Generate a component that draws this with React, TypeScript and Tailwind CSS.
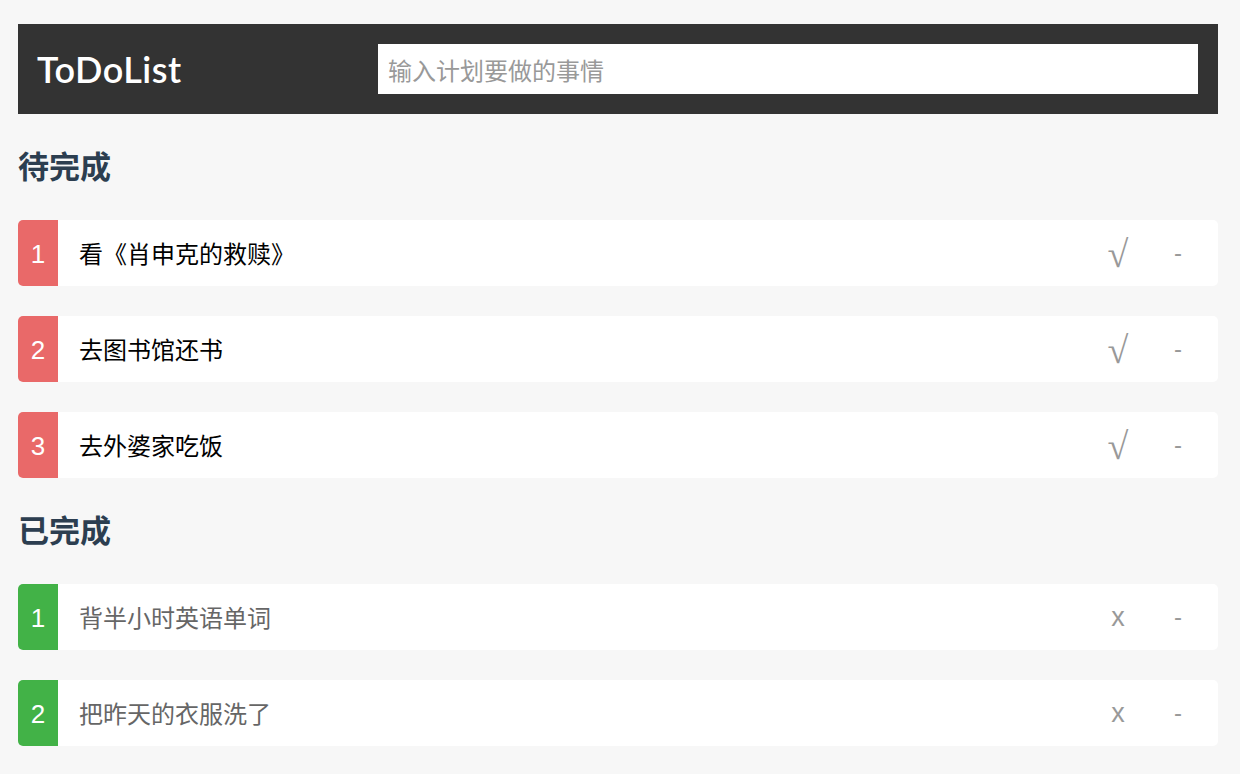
import { useState } from "react";

type Todo = { id: number; title: string; done: boolean };

const initial: Todo[] = [
  { id: 1, title: "看《肖申克的救赎》", done: false },
  { id: 2, title: "去图书馆还书", done: false },
  { id: 3, title: "去外婆家吃饭", done: false },
  { id: 4, title: "背半小时英语单词", done: true },
  { id: 5, title: "把昨天的衣服洗了", done: true },
];

const cjk = "font-['PingFang_SC','Noto_Sans_CJK_SC',sans-serif]";

function TodoRow({
  index,
  todo,
  onToggle,
  onRemove,
}: {
  index: number;
  todo: Todo;
  onToggle: () => void;
  onRemove: () => void;
}) {
  return (
    <li className="flex h-[66px] items-center rounded-[5px] bg-white">
      <span
        className={`flex h-full w-10 shrink-0 items-center justify-center rounded-l-[5px] pt-[2px] font-['Liberation_Sans',sans-serif] text-[26px] text-white ${
          todo.done ? "bg-[#42b247]" : "bg-[#e96969]"
        }`}
      >
        {index}
      </span>
      <span
        className={`flex-1 pl-[21px] text-[24px] ${cjk} ${
          todo.done ? "text-[#666]" : "text-black"
        }`}
      >
        {todo.title}
      </span>
      <div className="flex pr-[10px] text-[#999]">
        <button
          type="button"
          onClick={onToggle}
          className="flex h-[66px] w-[60px] items-center justify-center leading-none"
        >
          {todo.done ? (
            <span className="font-['Liberation_Sans',sans-serif] text-[27px]">x</span>
          ) : (
            <span className="pt-[2px] font-['Liberation_Serif',serif] text-[38px] font-light">√</span>
          )}
        </button>
        <button
          type="button"
          onClick={onRemove}
          className="w-[60px] text-center font-['Liberation_Sans',sans-serif] text-[24px] leading-none"
        >
          -
        </button>
      </div>
    </li>
  );
}

export default function App() {
  const [todos, setTodos] = useState<Todo[]>(initial);
  const [text, setText] = useState("");

  const pending = todos.filter((t) => !t.done);
  const finished = todos.filter((t) => t.done);

  const toggle = (id: number) =>
    setTodos((list) => list.map((t) => (t.id === id ? { ...t, done: !t.done } : t)));
  const remove = (id: number) => setTodos((list) => list.filter((t) => t.id !== id));

  const add = () => {
    if (!text.trim()) return;
    setTodos((list) => [...list, { id: Date.now(), title: text.trim(), done: false }]);
    setText("");
  };

  return (
    <div className="min-h-screen bg-[#f7f7f7] pt-6 pb-10">
      <div className="ml-[18px] w-[1200px]">
        <header className="flex h-[90px] items-center justify-between bg-[#333] pl-[19px] pr-5">
          <h1 className="font-['Lato',sans-serif] text-[36px] font-semibold tracking-[0.5px] text-white">
            ToDoList
          </h1>
          <input
            value={text}
            onChange={(e) => setText(e.target.value)}
            onKeyDown={(e) => e.key === "Enter" && add()}
            placeholder="输入计划要做的事情"
            className={`h-[50px] w-[820px] bg-white px-[10px] text-[24px] text-[#333] outline-none placeholder:text-[#999] ${cjk}`}
          />
        </header>

        <section>
          <h2 className={`flex h-[106px] items-center pb-[4px] text-[31px] font-bold text-[#2c3e50] ${cjk}`}>
            待完成
          </h2>
          <ul className="flex flex-col gap-[30px]">
            {pending.map((t, i) => (
              <TodoRow
                key={t.id}
                index={i + 1}
                todo={t}
                onToggle={() => toggle(t.id)}
                onRemove={() => remove(t.id)}
              />
            ))}
          </ul>
        </section>

        <section>
          <h2 className={`flex h-[106px] items-center pb-[4px] text-[31px] font-bold text-[#2c3e50] ${cjk}`}>
            已完成
          </h2>
          <ul className="flex flex-col gap-[30px]">
            {finished.map((t, i) => (
              <TodoRow
                key={t.id}
                index={i + 1}
                todo={t}
                onToggle={() => toggle(t.id)}
                onRemove={() => remove(t.id)}
              />
            ))}
          </ul>
        </section>
      </div>
    </div>
  );
}
